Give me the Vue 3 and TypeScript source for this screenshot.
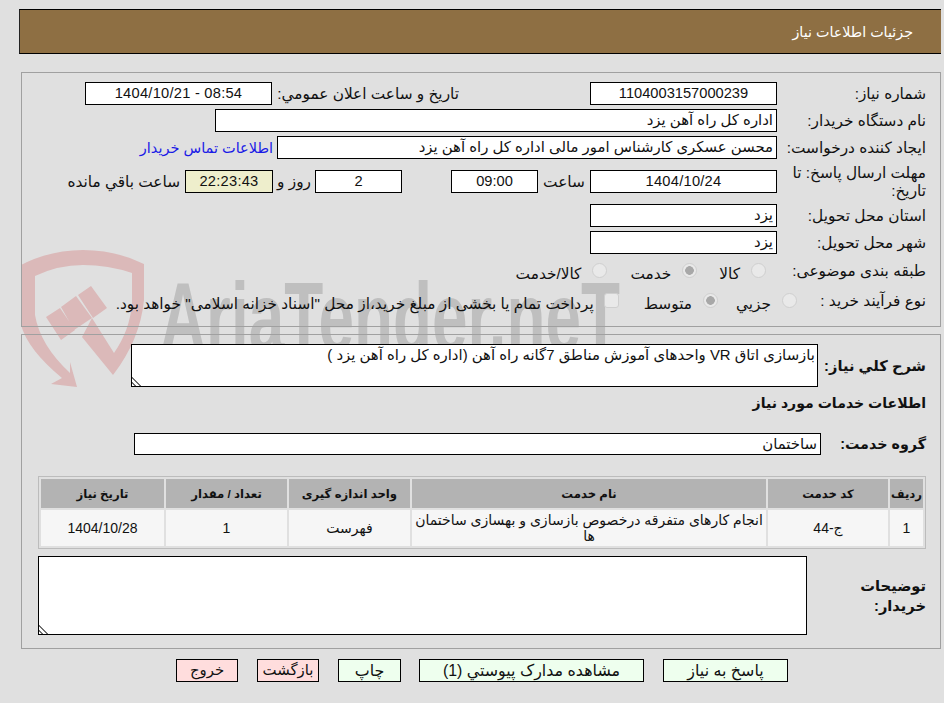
<script setup lang="ts">
interface Btn { label: string; tone: string; width: string }
const buttons: Btn[] = [
  { label: 'پاسخ به نیاز', tone: 'ok', width: 'w125' },
  { label: 'مشاهده مدارک پیوستي (1)', tone: 'ok', width: 'w225' },
  { label: 'چاپ', tone: 'ok', width: 'w63' },
  { label: 'بازگشت', tone: 'no', width: 'w62' },
  { label: 'خروج', tone: 'no', width: 'w62' }
]
const headers: string[] = ['رديف', 'کد خدمت', 'نام خدمت', 'واحد اندازه گیری', 'تعداد / مقدار', 'تاریخ نیاز']
</script>

<template>
  <div class="page" dir="rtl">
    <svg class="mark" width="640" height="150" viewBox="0 250 640 150" aria-hidden="true">
      <path class="mark-red" d="M21 265Q50 250 83 250Q116 250 144 264L144 300Q140 340 113 375L82 337L92 318L114 353Q130 330 132 303L132 273Q108 265 83 265Q58 265 35 276L35 315Q40 345 70 373L70 362L77 387L51 384L62 378Q28 350 21 325Z" />
      <path class="mark-red" d="M78 295L91 286L107 308L93 318ZM61 307L76 296L92 318L74 330ZM46 317L60 308L75 330L61 340Z" />
      <text class="mark-text" x="160" y="351" textLength="460" lengthAdjust="spacingAndGlyphs">AriaTender.neT</text>
    </svg>

    <header class="title-bar">جزئیات اطلاعات نیاز</header>

    <section class="panel first">
      <div class="row">
        <span class="lbl">شماره نیاز:</span>
        <span class="box w187 mid num">1104003157000239</span>
        <span class="pub-label">تاریخ و ساعت اعلان عمومي:</span>
        <span class="box w187 mid num date">08:54 - 1404/10/21</span>
      </div>
      <div class="row">
        <span class="lbl">نام دستگاه خریدار:</span>
        <span class="box w562">اداره کل راه آهن یزد</span>
      </div>
      <div class="row">
        <span class="lbl">ایجاد کننده درخواست:</span>
        <span class="box w500">محسن عسکری کارشناس امور مالی اداره کل راه آهن یزد</span>
        <a class="contact">اطلاعات تماس خریدار</a>
      </div>
      <div class="row tall">
        <span class="lbl">مهلت ارسال پاسخ: تا تاریخ:</span>
        <span class="box w187 mid num date">1404/10/24</span>
        <span class="t-hour">ساعت</span>
        <span class="box w87 mid num">09:00</span>
        <span class="t-gap"></span>
        <span class="box w87 mid num">2</span>
        <span class="t-day">روز و</span>
        <span class="box w88 mid num date timer">22:23:43</span>
        <span class="t-left">ساعت باقي مانده</span>
      </div>
      <div class="row">
        <span class="lbl">استان محل تحویل:</span>
        <span class="box w187">یزد</span>
      </div>
      <div class="row">
        <span class="lbl">شهر محل تحویل:</span>
        <span class="box w187">یزد</span>
      </div>
      <div class="row choice">
        <span class="lbl">طبقه بندی موضوعی:</span>
        <span class="opts cat">
          <span class="opt"><i class="radio"></i><b>کالا</b></span>
          <span class="opt"><i class="radio on"></i><b>خدمت</b></span>
          <span class="opt"><i class="radio"></i><b>کالا/خدمت</b></span>
        </span>
      </div>
      <div class="row choice">
        <span class="lbl">نوع فرآیند خرید :</span>
        <span class="opts kind">
          <span class="opt"><i class="radio"></i><b>جزيي</b></span>
          <span class="opt"><i class="radio on"></i><b>متوسط</b></span>
          <span class="opt"><i class="check"></i><b>پرداخت تمام یا بخشی از مبلغ خرید،از محل "اسناد خزانه اسلامی" خواهد بود.</b></span>
        </span>
      </div>
    </section>

    <section class="panel second">
      <div class="row desc">
        <strong class="lbl-b w108">شرح کلي نیاز:</strong>
        <textarea class="area h43" readonly dir="rtl">بازسازی اتاق VR واحدهای آموزش مناطق 7گانه راه آهن (اداره کل راه آهن یزد )</textarea>
      </div>
      <h2 class="sub">اطلاعات خدمات مورد نیاز</h2>
      <div class="row group">
        <strong class="lbl-b w105">گروه خدمت:</strong>
        <span class="box w687 tight">ساختمان</span>
      </div>
      <table class="grid">
        <thead>
          <tr><th v-for="h in headers" :key="h">{{ h }}</th></tr>
        </thead>
        <tbody>
          <tr>
            <td>1</td>
            <td>ج-44</td>
            <td class="name">انجام کارهای متفرقه درخصوص بازسازی و بهسازی ساختمان ها</td>
            <td>فهرست</td>
            <td>1</td>
            <td>1404/10/28</td>
          </tr>
        </tbody>
      </table>
      <div class="row notes">
        <strong class="lbl-b w119">توضیحات خریدار:</strong>
        <textarea class="area h79" readonly dir="rtl"></textarea>
      </div>
    </section>

    <div class="actions">
      <button v-for="b in buttons" :key="b.label" type="button" class="act" :class="[b.tone, b.width]">{{ b.label }}</button>
    </div>
  </div>
</template>

<style>
html { background: #e0e0e0; }
body { margin: 0; }
</style>

<style scoped>
.page {
  position: relative;
  box-sizing: border-box;
  width: 944px;
  height: 703px;
  padding: 9px 3px 0 19px;
  font-family: "Liberation Sans", "DejaVu Sans", sans-serif;
  font-size: 15.35px;
  color: #111;
  overflow: hidden;
}
.mark { position: absolute; left: 0; top: 250px; z-index: -1; direction: ltr; }
.mark-red { fill: #dbb9b9; }
.mark-text { font: bold 98px "Liberation Sans", sans-serif; fill: #bfbfbf; direction: ltr; }
.title-bar {
  box-sizing: border-box;
  height: 45px;
  padding-right: 28px;
  line-height: 45px;
  font-size: 14.3px;
  color: #fff;
  background: #8e6f43;
  border: 1px solid #000;
  border-width: 1px 0;
  border-left: 1px solid #222;
}
.panel {
  box-sizing: border-box;
  margin-left: 2px;
  border: 1px solid #a0a0a0;
  padding-right: 14px;
}
.first { margin-top: 18px; height: 255px; padding-top: 9px; display: flex; flex-direction: column; gap: 4px; }
.second { margin-top: 7px; height: 315px; padding-top: 9px; padding-left: 16px; }
.row { display: flex; align-items: center; height: 23px; }
.row.tall { height: 37px; }
.row.choice { height: 26px; }
.lbl { width: 149px; flex: none; line-height: 18px; }
.box {
  box-sizing: border-box;
  height: 23px;
  line-height: 21px;
  padding: 0 3px;
  border: 1px solid #000;
  background: #fff;
  flex: none;
  font-size: 14.9px;
  white-space: nowrap;
}
.mid { text-align: center; }
.num { font-size: 14.67px; }
.date { letter-spacing: 0.25px; }
.w187 { width: 187px; }
.w562 { width: 562px; }
.w500 { width: 500px; }
.w87 { width: 87px; }
.w88 { width: 88px; }
.w687 { width: 687px; }
.timer { background: #eeeecc; }
.pub-label { margin-right: 131px; width: 187px; flex: none; white-space: nowrap; }
.contact { margin-right: 4px; color: #1a1ae6; font-size: 14.5px; white-space: nowrap; }
.t-hour { width: 52px; flex: none; text-align: center; }
.t-gap { width: 49px; flex: none; }
.t-day { width: 42px; flex: none; text-align: center; }
.t-left { margin-right: 5px; white-space: nowrap; }
.opts { display: flex; align-items: center; }
.opt { display: flex; align-items: center; white-space: nowrap; }
.opt b { font-weight: normal; margin-top: 6px; margin-right: 11px; }
.radio, .check {
  display: block;
  box-sizing: border-box;
  width: 15px;
  height: 15px;
  background: #e9e9e9;
  border: 1px solid #cfcfcf;
  border-radius: 50%;
  flex: none;
  margin-top: -2px;
}
.check { border-radius: 3px; }
.radio.on { background: radial-gradient(circle, #a8a8a8 0 4px, #e9e9e9 4.6px); }
.cat { padding-right: 11px; }
.cat .opt:nth-child(2) { margin-right: 22px; }
.cat .opt:nth-child(3) { margin-right: 23px; }
.kind { margin-right: -20px; }
.kind .opt:nth-child(2) { margin-right: 18px; }
.kind .opt:nth-child(3) { margin-right: 25px; }
.kind .opt:nth-child(3) b { margin-right: 10px; }
.lbl-b { flex: none; font-weight: bold; font-size: 14.67px; }
.w108 { width: 108px; }
.w105 { width: 105px; font-size: 14.3px; }
.w119 { width: 119px; line-height: 20px; }
.desc { height: 43px; }
.area {
  box-sizing: border-box;
  display: block;
  flex: none;
  margin: 0;
  padding: 1px 2px;
  border: 1px solid #000;
  background: #fff;
  color: #111;
  font: inherit;
  font-size: 14.9px;
  outline: none;
  resize: both;
}
.area::-webkit-resizer {
  background: linear-gradient(45deg, transparent 2px, #707070 2px 3.5px, transparent 3.5px 5.5px, #707070 5.5px 7px, transparent 7px) left bottom / 11px 11px no-repeat;
}
.h43 { width: 687px; height: 43px; }
.h79 { width: 769px; height: 79px; }
.sub { margin: 6px 0 0; height: 20px; line-height: 20px; font-size: 14.1px; font-weight: bold; }
.group { margin-top: 20px; height: 22px; }
.tight { height: 22px; line-height: 20px; }
.grid {
  box-sizing: border-box;
  table-layout: fixed;
  width: 888px;
  margin-top: 21px;
  border: 1px solid #bcbcbc;
  border-spacing: 2px;
  border-collapse: separate;
  font-size: 14px;
}
.grid th {
  height: 29px;
  padding: 0;
  background: #b3b3b3;
  font-size: 11.7px;
  color: #111;
}
.grid td {
  height: 36px;
  padding: 0 2px;
  background: #f6f6f6;
  text-align: center;
  line-height: 16px;
}
.grid th:nth-child(1) { width: 33px; }
.grid th:nth-child(2) { width: 120px; }
.grid th:nth-child(3) { width: 354px; }
.grid th:nth-child(4) { width: 121px; }
.grid th:nth-child(5) { width: 121px; }
.notes { margin-top: 7px; height: 79px; }
.actions {
  display: flex;
  justify-content: center;
  gap: 19px;
  margin-top: 10px;
  padding-left: 4px;
}
.act {
  box-sizing: border-box;
  height: 23px;
  padding: 0;
  border: 1px solid #000;
  border-radius: 0;
  color: #111;
  font: inherit;
  line-height: 21px;
}
.act:nth-child(2) { margin-left: -1px; }
.ok { background: #eeffee; font-size: 15.9px; }
.no { background: #ffdddd; font-size: 14.9px; }
.w125 { width: 125px; }
.w225 { width: 225px; }
.w63 { width: 63px; }
.w62 { width: 62px; }
</style>
